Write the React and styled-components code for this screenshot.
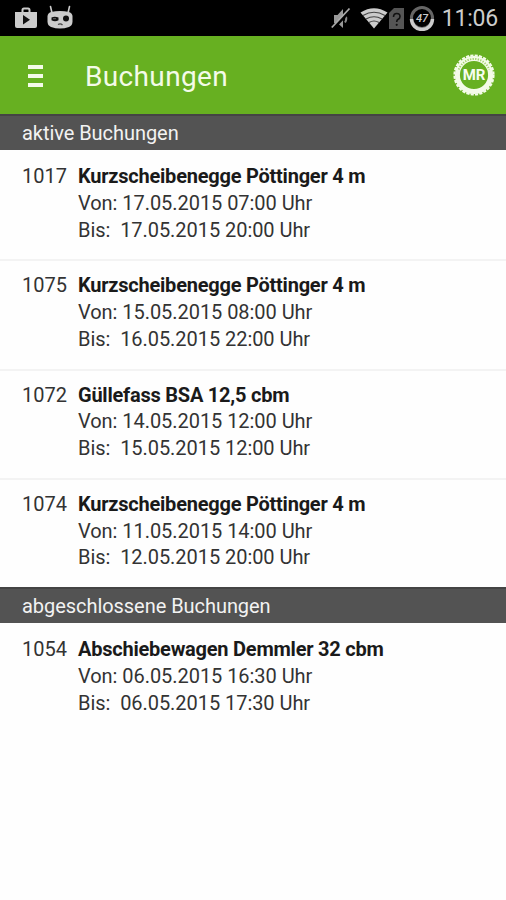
import React from 'react';
import styled, { createGlobalStyle } from 'styled-components';

const sections = [
  {
    title: 'aktive Buchungen',
    bookings: [
      { id: 1017, name: 'Kurzscheibenegge Pöttinger 4 m', from: '17.05.2015 07:00', to: '17.05.2015 20:00' },
      { id: 1075, name: 'Kurzscheibenegge Pöttinger 4 m', from: '15.05.2015 08:00', to: '16.05.2015 22:00' },
      { id: 1072, name: 'Güllefass BSA 12,5 cbm', from: '14.05.2015 12:00', to: '15.05.2015 12:00' },
      { id: 1074, name: 'Kurzscheibenegge Pöttinger 4 m', from: '11.05.2015 14:00', to: '12.05.2015 20:00' }
    ]
  },
  {
    title: 'abgeschlossene Buchungen',
    bookings: [
      { id: 1054, name: 'Abschiebewagen Demmler 32 cbm', from: '06.05.2015 16:30', to: '06.05.2015 17:30' }
    ]
  }
];

const StoreIcon = () => (
  <svg width="24" height="24" viewBox="0 0 24 24">
    <path d="M8.500 6V4q0-1.500 1.500-1.500h4q1.500 0 1.500 1.500v2" fill="none" stroke="#ccc" strokeWidth="2" />
    <path d="M1 6h22v14q0 2-2 2H3q-2 0-2-2z" fill="#ccc" />
    <path d="M9 9l7 4.700-7 4.800z" fill="#111" />
  </svg>
);

const CyanogenIcon = () => (
  <svg width="28" height="26" viewBox="0 0 28 26">
    <path d="M6 8L4.500 1.500M22 8l1.500-6.500" stroke="#ccc" strokeWidth="1.600" strokeLinecap="round" />
    <path d="M5 7q9-2 18 0 3.500 1 3.500 4.500v5q0 4-3.500 5.500-9 3-18 0Q1.500 20.500 1.500 16.500v-5Q1.500 8 5 7z" fill="#ccc" />
    <path d="M5.500 12.500q3-1.500 7 0v2.800q-3.500 1.700-7 0z" fill="#111" />
    <path d="M7 13.700h3" stroke="#666" />
    <circle cx="20" cy="13.500" r="3" fill="#111" />
    <path d="M12 19.500q2.500-1.500 4.500.500" fill="none" stroke="#444" strokeWidth="1.300" />
  </svg>
);

const MutedIcon = () => (
  <svg width="22" height="24" viewBox="0 0 22 24">
    <path d="M4 9h3.500L13 3v19l-5.500-5H4z" fill="#999" />
    <path d="M15 9q2.500 3.500 0 7.500" fill="none" stroke="#888" strokeWidth="2" />
    <path d="M3.500 22L21 4" stroke="#000" strokeWidth="3" />
    <path d="M1.800 21.500L19.500 2.500" stroke="#aaa" strokeWidth="1.800" />
  </svg>
);

const WifiIcon = () => (
  <svg width="28" height="22" viewBox="0 0 28 22">
    <path d="M14 21.500L.5 5.500Q14-3 27.500 5.500z" fill="#ccc" />
    <path d="M3 8.500q11-6.500 22 0M6 12q8-4.500 16 0M9 15.500q5-3 10 0" fill="none" stroke="#444" strokeWidth="1.200" />
  </svg>
);

const SimIcon = () => (
  <svg width="15" height="21" viewBox="0 0 15 21">
    <path d="M5 0h10v21H0V5z" fill="#555" />
    <path d="M4.500 9q0-3.500 3.300-3.500T11 8.500q0 1.800-1.800 2.800-1.500.8-1.500 2.700" fill="none" stroke="#111" strokeWidth="1.600" />
    <circle cx="7.700" cy="16.800" r="1.100" fill="#111" />
  </svg>
);

const BatteryIcon = () => (
  <svg width="26" height="26" viewBox="0 0 26 26">
    <circle cx="13" cy="13" r="10.500" fill="none" stroke="#666" strokeWidth="3" />
    <path d="M2.500 14a10.500 10.500 0 0 0 21 0" fill="none" stroke="#ccc" strokeWidth="3.400" />
    <text x="13" y="16.500" textAnchor="middle" fontSize="11" fontWeight="500" fontStyle="italic" fill="#ccc">47</text>
  </svg>
);

const Logo = () => (
  <svg width="42" height="42" viewBox="0 0 42 42">
    <circle cx="21" cy="21" r="16.600" fill="none" stroke="#f4fbe8" strokeWidth="5" />
    <circle cx="21" cy="21" r="19.600" fill="none" stroke="#f4fbe8" strokeWidth="2" strokeDasharray="3.200 1.200" />
    <path d="M5.800 15.500A16.200 16.200 0 0 1 36.200 15.500" fill="none" stroke="#a5d16f" strokeWidth="2" strokeDasharray="1.300 1.300" />
    <text x="21" y="26.300" textAnchor="middle" fontSize="15" fontWeight="700" fill="#f8fdf0">MR</text>
  </svg>
);

function Booking({ data: { id, name, from, to } }) {
  return (
    <Row>
      <Id>{id}</Id>
      <Details>
        <Name>{name}</Name>
        <Line>Von: {from} Uhr</Line>
        <Line>Bis:{'  '}{to} Uhr</Line>
      </Details>
    </Row>
  );
}

function App() {
  return (
    <>
      <GlobalStyle />
      <Screen>
        <StatusBar>
          <Notifications>
            <StoreIcon />
            <CyanogenIcon />
          </Notifications>
          <System>
            <MutedIcon />
            <WifiIcon />
            <SimIcon />
            <BatteryIcon />
            <Clock>11:06</Clock>
          </System>
        </StatusBar>
        <Header>
          <MenuButton aria-label="Menü">
            <Bar />
            <Bar />
            <Bar />
          </MenuButton>
          <Title>Buchungen</Title>
          <Logo />
        </Header>
        {sections.map(({ title, bookings }) => (
          <section key={title}>
            <SectionTitle>{title}</SectionTitle>
            {bookings.map(booking => <Booking key={booking.id} data={booking} />)}
          </section>
        ))}
      </Screen>
    </>
  );
}

const GlobalStyle = createGlobalStyle`
  * {
    box-sizing: border-box;
  }

  body {
    margin: 0;
    background: #fefefe;
    font-family: Roboto, sans-serif;
  }
`;

const Screen = styled.div`
  width: 100%;
  min-height: 900px;
  background: #fefefe;
`;

const StatusBar = styled.div`
  height: 36px;
  padding: 0 8px 0 14px;
  display: flex;
  align-items: center;
  justify-content: space-between;
  background: #000;
`;

const Notifications = styled.div`
  display: flex;
  align-items: center;
  gap: 8px;
`;

const System = styled.div`
  display: flex;
  align-items: center;

  & svg:nth-child(2) {
    margin-left: 8px;
  }

  & svg:nth-child(3) {
    margin-left: 1px;
  }

  & svg:nth-child(4) {
    margin-left: 5px;
  }
`;

const Clock = styled.span`
  margin-left: 7px;
  padding-top: 2px;
  font-size: 23px;
  line-height: 34px;
  letter-spacing: -0.2px;
  color: #ccc;
`;

const Header = styled.header`
  height: 78px;
  padding: 0 11px 0 28px;
  display: flex;
  align-items: center;
  background: #67b021;
`;

const MenuButton = styled.button`
  width: 15px;
  padding: 2px 0 0;
  display: flex;
  flex-direction: column;
  gap: 5px;
  border: none;
  background: none;
`;

const Bar = styled.span`
  height: 4px;
  background: #f4fbe8;
`;

const Title = styled.h1`
  flex: 1;
  margin: 0 0 0 42px;
  padding-top: 2px;
  font-size: 28px;
  font-weight: 400;
  letter-spacing: 0.35px;
  color: #f4fbe8;
`;

const SectionTitle = styled.h2`
  height: 36px;
  margin: 0;
  padding: 0 22px;
  border-top: 2px solid #444;
  font-size: 20px;
  font-weight: 400;
  line-height: 34px;
  letter-spacing: -0.05px;
  color: #f2f2f2;
  background: #535353;
`;

const Row = styled.div`
  height: 109.250px;
  padding: 13px 22px 0;
  display: flex;
  line-height: 26.800px;
  color: #333;

  & + & {
    border-top: 2px solid #f3f3f3;
    padding-top: 11px;
  }
`;

const Id = styled.div`
  width: 56px;
  font-size: 20px;
`;

const Details = styled.div`
  white-space: pre;
`;

const Name = styled.div`
  font-size: 20px;
  font-weight: 700;
  letter-spacing: -0.23px;
  color: #1a1a1a;
`;

const Line = styled.div`
  font-size: 20px;
  letter-spacing: -0.05px;
`;

export default App;
